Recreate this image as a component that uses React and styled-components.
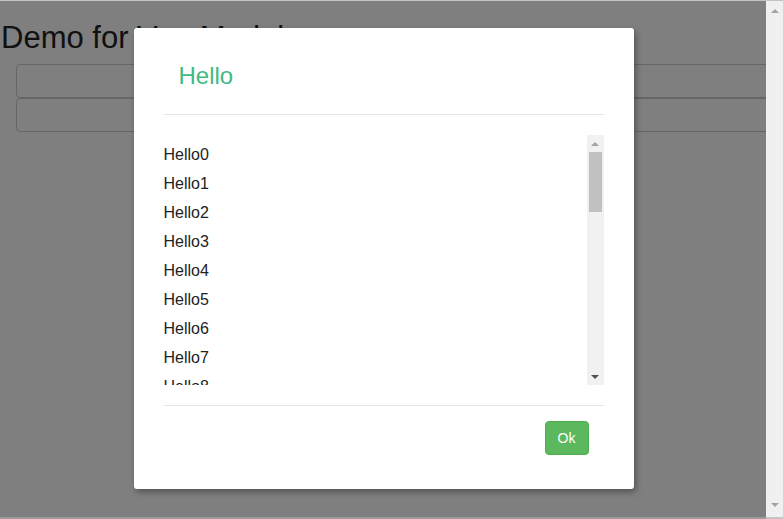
import React from "react";
import styled, { createGlobalStyle } from "styled-components";

const GlobalStyle = createGlobalStyle`
  html, body {
    margin: 0;
    padding: 0;
    height: 100%;
    overflow: hidden;
    font-family: "Liberation Sans", Arial, sans-serif;
    color: #222;
    background: #fff;
  }
`;

const Page = styled.div`
  display: flex;
  height: 100vh;
  border-top: 1px solid #c4c4c4;
  box-sizing: border-box;
`;

const Main = styled.div`
  flex: 1;
  position: relative;
  overflow: hidden;
`;

const Title = styled.h1`
  margin: 19px 0 0;
  padding-left: 1px;
  font-size: 31px;
  font-weight: 400;
  line-height: 36px;
  color: #222;
`;

const Fields = styled.div`
  display: flex;
  flex-direction: column;
  margin: 8px 0 0 16px;
`;

const Field = styled.div`
  width: calc(100% + 20px);
  height: 34px;
  box-sizing: border-box;
  border: 1px solid #ccc;
  border-radius: 4px;
  background: #fff;
`;

const BottomEdge = styled.div`
  position: absolute;
  left: 0;
  right: 0;
  bottom: 0;
  height: 2px;
  background: #9c9c9c;
  z-index: 2;
`;

const Overlay = styled.div`
  position: absolute;
  inset: 0;
  background: rgba(0, 0, 0, 0.5);
  display: flex;
  justify-content: center;
  align-items: flex-start;
`;

const Modal = styled.div`
  margin: 27px 0 0 1px;
  width: 500px;
  background: #fff;
  border-radius: 3px;
  box-shadow: 2px 3px 6px rgba(0, 0, 0, 0.35);
  display: flex;
  flex-direction: column;
`;

const Header = styled.div`
  margin: 0 30px;
  padding: 35px 15px 25px;
  border-bottom: 1px solid #e5e5e5;
  font-size: 24px;
  line-height: 26px;
  color: #42b983;
`;

const Body = styled.div`
  margin: 20px 30px;
  height: 250px;
  display: flex;
`;

const List = styled.div`
  flex: 1;
  overflow: hidden;
  padding-top: 5px;
`;

const Item = styled.div`
  font-size: 16px;
  line-height: 29px;
  color: #222;
`;

const Track = styled.div`
  width: 17px;
  background: #f1f1f1;
  display: flex;
  flex-direction: column;
`;

const TrackButton = styled.div`
  height: 17px;
  display: flex;
  align-items: center;
  justify-content: center;
`;

const Thumb = styled.div`
  height: 60px;
  margin: 0 2px;
  background: #c1c1c1;
`;

const TrackSpace = styled.div`
  flex: 1;
`;

const Arrow = styled.div`
  width: 0;
  height: 0;
  border-left: ${(p) => p.$half}px solid transparent;
  border-right: ${(p) => p.$half}px solid transparent;
  ${(p) =>
    p.$down
      ? `border-top: 4px solid ${p.$color};`
      : `border-bottom: 4px solid ${p.$color};`}
`;

const Footer = styled.div`
  margin: 0 30px;
  padding: 15px 15px 34px;
  border-top: 1px solid #e5e5e5;
  display: flex;
  justify-content: flex-end;
`;

const OkButton = styled.button`
  height: 34px;
  padding: 0 12px;
  border: 1px solid #4cae4c;
  border-radius: 4px;
  background: #5cb85c;
  color: #fff;
  font-family: "Liberation Sans", Arial, sans-serif;
  font-size: 14px;
  cursor: pointer;
`;

const ScrollRail = styled.div`
  width: 17px;
  background: #f0f0f0;
  display: flex;
  flex-direction: column;
  justify-content: space-between;
  align-items: center;
  padding: 8px 0 10px;
  box-sizing: border-box;
  border-bottom: 2px solid #c4c4c4;
`;

const items = Array.from({ length: 30 }, (_, i) => `Hello${i}`);

export default function App() {
  return (
    <>
      <GlobalStyle />
      <Page>
        <Main>
          <Title>Demo for Vue Modal</Title>
          <Fields>
            <Field />
            <Field />
          </Fields>
          <Overlay>
            <Modal>
              <Header>Hello</Header>
              <Body>
                <List>
                  {items.map((t) => (
                    <Item key={t}>{t}</Item>
                  ))}
                </List>
                <Track>
                  <TrackButton>
                    <Arrow $half={4} $color="#a3a3a3" />
                  </TrackButton>
                  <Thumb />
                  <TrackSpace />
                  <TrackButton>
                    <Arrow $down $half={4} $color="#505050" />
                  </TrackButton>
                </Track>
              </Body>
              <Footer>
                <OkButton>Ok</OkButton>
              </Footer>
            </Modal>
          </Overlay>
          <BottomEdge />
        </Main>
        <ScrollRail>
          <Arrow $half={4} $color="#a3a3a3" />
          <Arrow $down $half={4} $color="#a3a3a3" />
        </ScrollRail>
      </Page>
    </>
  );
}
